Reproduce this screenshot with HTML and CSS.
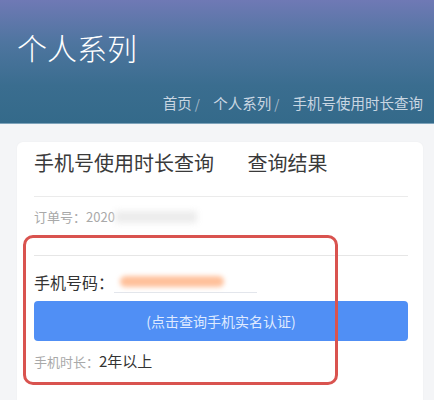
FILE: index.html
```html
<!DOCTYPE html>
<html>
  <head>
    <meta name="viewport" content="width=device-width, initial-scale=1" />
    <link rel="stylesheet" href="styles.css">
  </head>

  <body>
    <div class="banner">
      <div class="banner-title">个人系列</div>
      <div class="crumbs">
        <span>首页</span><span class="sep">/</span>
        <span>个人系列</span><span class="sep">/</span>
        <span>手机号使用时长查询</span>
      </div>
    </div>

    <div class="main">
      <div class="card">
        <div class="card-head">
          <span>手机号使用时长查询</span>
          <span class="head-right">查询结果</span>
        </div>

        <div class="order">
          订单号：2020<span class="blur-grey"></span>
        </div>

        <div class="phone-row">
          <span class="phone-label">手机号码：</span>
          <span class="phone-value"><span class="blur-orange"></span></span>
        </div>

        <button class="btn-check">(点击查询手机实名认证)</button>

        <div class="duration">
          <span class="dur-label">手机时长：</span><span class="dur-value">2年以上</span>
        </div>

        <div class="mark"></div>
      </div>
    </div>
  </body>
</html>
```

FILE: styles.css
```css
body {
  margin: 0;
  background-color: #f4f5f7;
  font-family: "Noto Sans CJK SC", "Noto Sans", sans-serif;
  height: 400px;
  overflow: hidden;
}

.banner {
  height: 124px;
  box-sizing: border-box;
  padding: 30px 11px 0 17px;
  background: linear-gradient(to bottom, #6f79b5 0%, #4e759f 35%, #3a6d8f 70%, #346a8a 100%);
  border-bottom: 1px solid #7ea3ba;
}

.banner-title {
  color: #ffffff;
  font-size: 30px;
  line-height: 34px;
  font-weight: 300;
}

.crumbs {
  margin-top: 29px;
  text-align: right;
  color: #c9d6e2;
  font-size: 14.5px;
  line-height: 20px;
}

.crumbs .sep {
  margin: 0 10px 0 3px;
  color: #a8bccc;
  font-size: 13px;
}

.main {
  padding: 18px 11px 0 17px;
}

.card {
  position: relative;
  background-color: #ffffff;
  border-radius: 6px;
  padding: 0 15px 60px 17px;
  box-shadow: 0 0 2px rgba(0, 0, 0, 0.04);
}

.card-head {
  padding: 7px 0 19px 0;
  font-size: 20px;
  line-height: 28px;
  color: #3a3a3a;
  border-bottom: 1px solid #ebebeb;
}

.head-right {
  margin-left: 29px;
}

.order {
  padding: 10px 0 28px 0;
  font-size: 13px;
  line-height: 20px;
  color: #a9a9a9;
  border-bottom: 1px solid #e6e6e6;
}

.blur-grey {
  display: inline-block;
  width: 82px;
  height: 12px;
  vertical-align: -1px;
  background-color: #ececec;
  filter: blur(3px);
}

.phone-row {
  display: flex;
  align-items: center;
  padding-top: 14px;
  height: 24px;
}

.phone-label {
  font-size: 16px;
  color: #333333;
}

.phone-value {
  display: inline-block;
  width: 143px;
  height: 22px;
  box-sizing: border-box;
  padding: 5px 0 0 6px;
  border-bottom: 1px solid #e3e6ec;
}

.blur-orange {
  display: block;
  width: 104px;
  height: 11px;
  background-color: #ffc09a;
  border-radius: 6px;
  filter: blur(2.5px);
}

.btn-check {
  display: block;
  width: 100%;
  height: 40px;
  margin-top: 7px;
  border: none;
  border-radius: 4px;
  background-color: #508ff5;
  color: #dfeaff;
  font-family: "Noto Sans CJK SC", "Noto Sans", sans-serif;
  font-size: 14px;
}

.duration {
  margin-top: 9px;
  line-height: 20px;
}

.dur-label {
  font-size: 13px;
  color: #a9a9a9;
}

.dur-value {
  font-size: 15px;
  color: #333333;
}

.mark {
  position: absolute;
  left: 6px;
  top: 93px;
  width: 315px;
  height: 150px;
  box-sizing: border-box;
  border: 3px solid #d9534f;
  border-radius: 10px;
}
```
